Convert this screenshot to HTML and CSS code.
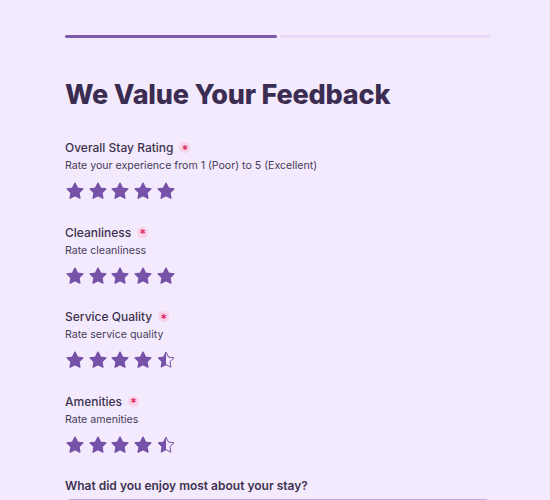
FILE: index.html
```html
<!DOCTYPE html>
<html lang="en">
<head>
  <meta charset="UTF-8">
  <title>Feedback</title>
  <link rel="stylesheet" href="styles.css">
</head>
<body>
  <svg class="defs" width="0" height="0">
    <defs>
      <linearGradient id="half" x1="0" x2="1" y1="0" y2="0">
        <stop offset="50%" stop-color="#7652a8"/>
        <stop offset="50%" stop-color="transparent"/>
      </linearGradient>
      <symbol id="star" viewBox="0 0 24 24">
        <path d="M12 2.5l2.95 5.98 6.6.96-4.78 4.65 1.13 6.57L12 17.56l-5.9 3.1 1.13-6.57-4.78-4.65 6.6-.96z"/>
      </symbol>
    </defs>
  </svg>

  <div class="page">
    <div class="progress">
      <span class="seg done"></span>
      <span class="seg"></span>
    </div>

    <h1 class="title">We Value Your Feedback</h1>

    <div class="field">
      <div class="label">Overall Stay Rating <span class="req">*</span></div>
      <div class="hint">Rate your experience from 1 (Poor) to 5 (Excellent)</div>
      <div class="stars">
        <svg class="star"><use href="#star"/></svg>
        <svg class="star"><use href="#star"/></svg>
        <svg class="star"><use href="#star"/></svg>
        <svg class="star"><use href="#star"/></svg>
        <svg class="star"><use href="#star"/></svg>
      </div>
    </div>

    <div class="field">
      <div class="label">Cleanliness <span class="req">*</span></div>
      <div class="hint">Rate cleanliness</div>
      <div class="stars">
        <svg class="star"><use href="#star"/></svg>
        <svg class="star"><use href="#star"/></svg>
        <svg class="star"><use href="#star"/></svg>
        <svg class="star"><use href="#star"/></svg>
        <svg class="star"><use href="#star"/></svg>
      </div>
    </div>

    <div class="field">
      <div class="label">Service Quality <span class="req">*</span></div>
      <div class="hint">Rate service quality</div>
      <div class="stars">
        <svg class="star"><use href="#star"/></svg>
        <svg class="star"><use href="#star"/></svg>
        <svg class="star"><use href="#star"/></svg>
        <svg class="star"><use href="#star"/></svg>
        <svg class="star half"><use href="#star"/></svg>
      </div>
    </div>

    <div class="field">
      <div class="label">Amenities <span class="req">*</span></div>
      <div class="hint">Rate amenities</div>
      <div class="stars">
        <svg class="star"><use href="#star"/></svg>
        <svg class="star"><use href="#star"/></svg>
        <svg class="star"><use href="#star"/></svg>
        <svg class="star"><use href="#star"/></svg>
        <svg class="star half"><use href="#star"/></svg>
      </div>
    </div>

    <div class="field">
      <div class="label strong">What did you enjoy most about your stay?</div>
      <textarea class="answer" rows="4"></textarea>
    </div>
  </div>
</body>
</html>
```

FILE: styles.css
```css
* {
  box-sizing: border-box;
}

body {
  margin: 0;
  background: #f4eafd;
  font-family: Inter, "Noto Sans", sans-serif;
  color: #3b2d52;
}

.defs {
  position: absolute;
}

.page {
  padding: 35px 59px 0 65px;
}

.progress {
  display: flex;
  gap: 3px;
}

.seg {
  flex: 1;
  height: 3px;
  border-radius: 2px;
  background: #e6daf6;
}

.seg.done {
  background: #7b5aa8;
}

.title {
  margin: 40px 0 29px;
  font-size: 27px;
  font-weight: 800;
  letter-spacing: -0.2px;
  color: #3b2d52;
}

.field {
  margin-bottom: 23.5px;
}

.label {
  display: flex;
  align-items: center;
  gap: 6px;
  height: 15px;
  font-size: 12px;
  font-weight: 500;
  color: #3d3350;
}

.label.strong {
  font-weight: 600;
}

.req {
  display: inline-flex;
  align-items: center;
  justify-content: center;
  width: 11px;
  height: 11px;
  border-radius: 50%;
  background: #f8d2e8;
  color: #e0245e;
  font-size: 12px;
  font-weight: 600;
  line-height: 1;
  padding-top: 4px;
}

.hint {
  margin-top: 4px;
  font-size: 10.6px;
  color: #463c5c;
}

.stars {
  display: flex;
  gap: 2.7px;
  margin-top: 9px;
}

.star {
  width: 20px;
  height: 20px;
  fill: #7652a8;
  stroke: #7652a8;
  stroke-width: 1.6;
  stroke-linejoin: round;
}

.star.half {
  fill: url(#half);
  stroke-width: 1.2;
}

.answer {
  display: block;
  width: 100%;
  margin-top: 6px;
  height: 80px;
  border: 1px solid #c6a9ea;
  border-radius: 6px;
  background: #f8f2fe;
  resize: none;
}
```
